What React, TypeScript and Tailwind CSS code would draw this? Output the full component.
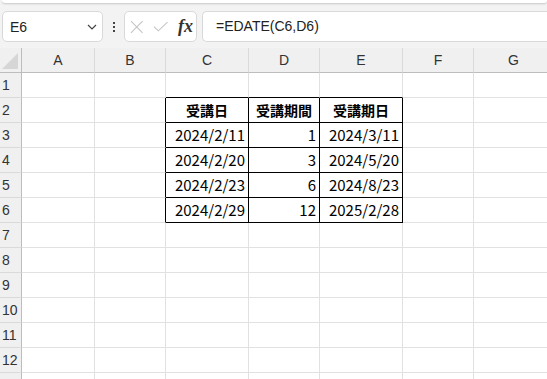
import React from "react";

const cols = [
  { name: "A", w: 73 },
  { name: "B", w: 71 },
  { name: "C", w: 83 },
  { name: "D", w: 71 },
  { name: "E", w: 83 },
  { name: "F", w: 71 },
  { name: "G", w: 80 },
];

const data: Record<string, { t: string; bold?: boolean; align: "center" | "right" }> = {
  "2-2": { t: "受講日", bold: true, align: "center" },
  "2-3": { t: "受講期間", bold: true, align: "center" },
  "2-4": { t: "受講期日", bold: true, align: "center" },
  "3-2": { t: "2024/2/11", align: "right" },
  "3-3": { t: "1", align: "right" },
  "3-4": { t: "2024/3/11", align: "right" },
  "4-2": { t: "2024/2/20", align: "right" },
  "4-3": { t: "3", align: "right" },
  "4-4": { t: "2024/5/20", align: "right" },
  "5-2": { t: "2024/2/23", align: "right" },
  "5-3": { t: "6", align: "right" },
  "5-4": { t: "2024/8/23", align: "right" },
  "6-2": { t: "2024/2/29", align: "right" },
  "6-3": { t: "12", align: "right" },
  "6-4": { t: "2025/2/28", align: "right" },
};

const inTable = (r: number, c: number) => r >= 2 && r <= 6 && c >= 2 && c <= 4;

export default function App() {
  const rows = Array.from({ length: 13 }, (_, i) => i + 1);
  return (
    <div className="w-[547px] h-[379px] overflow-hidden bg-white" style={{ fontFamily: '"Liberation Sans", "Noto Sans CJK JP", sans-serif' }}>
      {/* toolbar */}
      <div className="bg-[#f3f3f3] h-[48px] relative">
        <div className="ml-[2px] h-[3px] bg-white rounded-b-[4px] shadow-[0_1px_2px_rgba(0,0,0,0.18)]" />
        <div className="flex items-center pt-[8px] pl-[2px]">
          <div className="w-[101px] h-[31px] bg-white border border-[#d9d9d9] rounded-[5px] flex items-center justify-between pl-[7px] pr-[5px]">
            <span className="text-[14px] text-[#222] mt-[2px]">E6</span>
            <svg width="10" height="6" viewBox="0 0 10 6" className="mt-[1px]">
              <path d="M1 1 L5 5 L9 1" fill="none" stroke="#444" strokeWidth="1.2" />
            </svg>
          </div>
          <div className="w-[21px] flex flex-col items-center gap-[2px]">
            <div className="w-[2px] h-[2px] bg-[#444]" />
            <div className="w-[2px] h-[2px] bg-[#444]" />
            <div className="w-[2px] h-[2px] bg-[#444]" />
          </div>
          <div className="w-[73px] h-[31px] bg-white border border-[#d9d9d9] rounded-[5px] flex items-center pl-[5px] pr-[3px]">
            <svg width="14" height="14" viewBox="0 0 14 14">
              <path d="M1 1 L13 13 M13 1 L1 13" stroke="#c4c4c4" strokeWidth="1.1" fill="none" />
            </svg>
            <svg width="16" height="12" viewBox="0 0 16 12" className="ml-[9px]">
              <path d="M1 5.5 L5.5 10 L15 1" stroke="#c4c4c4" strokeWidth="1.1" fill="none" />
            </svg>
            <span className="ml-[10px] italic font-bold text-[18px] text-[#333] leading-none mb-[2px]" style={{ fontFamily: '"Liberation Serif", serif' }}>fx</span>
          </div>
          <div className="ml-[5px] flex-1 h-[31px] bg-white border border-[#d9d9d9] rounded-l-[5px] border-r-0 flex items-center pl-[13px]">
            <span className="text-[14px] text-[#222]">=EDATE(C6,D6)</span>
          </div>
        </div>
      </div>
      {/* grid */}
      <div className="grid" style={{ gridTemplateColumns: `22px ${cols.map((c) => c.w + "px").join(" ")}` }}>
        {/* header */}
        <div className="h-[25px] bg-[#f0f0f0] border-r border-b border-[#bdbdbd] relative">
          <div className="absolute right-[3px] bottom-[3px] w-0 h-0 border-l-[16px] border-l-transparent border-b-[16px] border-b-[#d6d6d6]" />
        </div>
        {cols.map((c) => (
          <div key={c.name} className="h-[25px] bg-[#f0f0f0] border-r border-b border-r-[#dadada] border-b-[#bdbdbd] flex items-center justify-center text-[14px] text-[#333]">
            {c.name}
          </div>
        ))}
        {rows.map((r) => (
          <React.Fragment key={r}>
            <div className="h-[25px] bg-[#f0f0f0] border-r border-b border-r-[#bdbdbd] border-b-[#dadada] flex items-center pl-[2px] text-[14px] text-[#333]">
              {r}
            </div>
            {cols.map((c, ci) => {
              const d = data[`${r}-${ci}`];
              const rightBlack = inTable(r, ci) || inTable(r, ci + 1);
              const bottomBlack = inTable(r, ci) || inTable(r + 1, ci);
              return (
                <div
                  key={c.name}
                  className={`h-[25px] border-r border-b flex items-center px-[3px] text-black ${rightBlack ? "border-r-black" : "border-r-[#e1e1e1]"} ${bottomBlack ? "border-b-black" : "border-b-[#e1e1e1]"} ${d?.align === "center" ? "justify-center" : "justify-end"}`}
                  style={{ fontFamily: '"Noto Sans CJK JP", sans-serif' }}
                >
                  {d && (
                    <span className={d.bold ? "font-bold text-[14px]" : "text-[15px]"}>{d.t}</span>
                  )}
                </div>
              );
            })}
          </React.Fragment>
        ))}
      </div>
    </div>
  );
}
